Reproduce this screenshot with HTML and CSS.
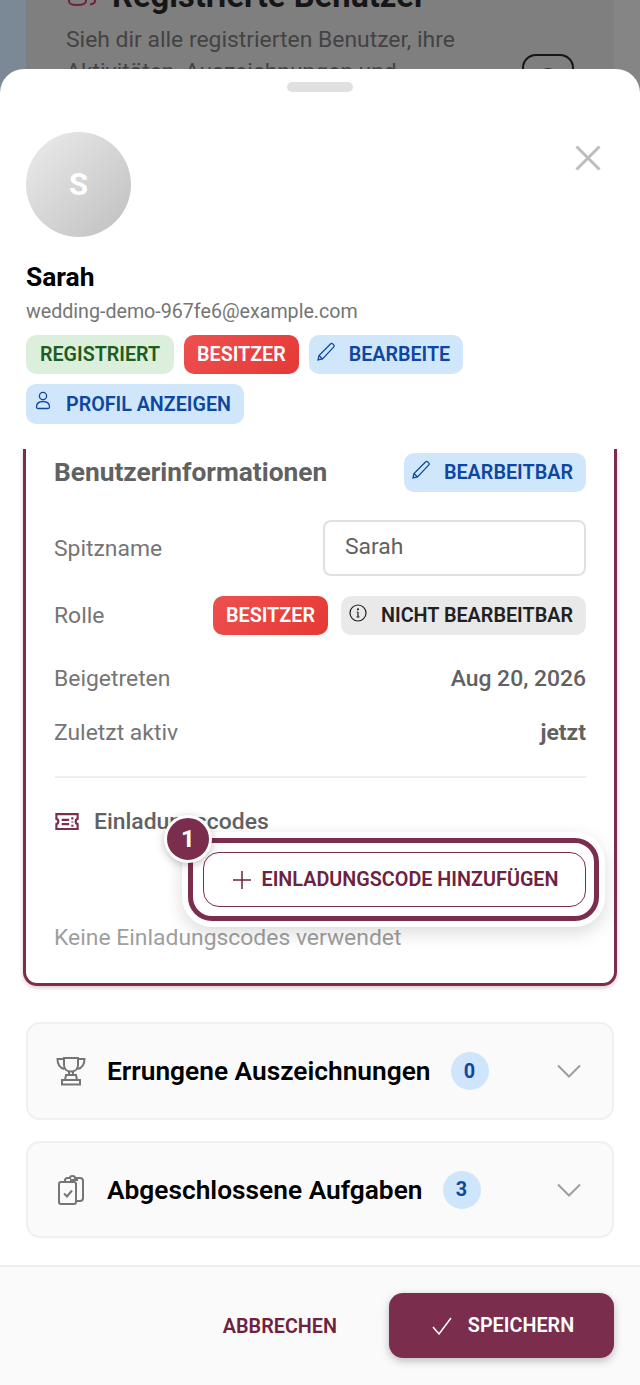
FILE: index.html

```html
<!DOCTYPE html>
<html lang="de">
<head>
    <meta charset="UTF-8">
    <meta name="viewport" content="width=device-width, initial-scale=1.0">
    <title>Registrierte Benutzer</title>
    <link rel="stylesheet" href="styles.css">
</head>
<body>
    <div class="backdrop">
        <div class="behind-card">
            <div class="behind-title">
                <svg class="behind-icon" viewBox="0 0 28 28" fill="none" stroke="#6d2240" stroke-width="2"><path d="M1 21c0-4 3-6 8-6s9 2 9 6c0 3-3 4-9 4s-8-1-8-4z"/><path d="M18 16c5 0 9 1 9 5 0 2-2 3-5 3.500"/></svg>
                <span>Registrierte Benutzer</span>
            </div>
            <p class="behind-text">Sieh dir alle registrierten Benutzer, ihre Aktivitäten, Auszeichnungen und</p>
            <div class="behind-button"></div>
        </div>
    </div>

    <div class="sheet">
        <div class="handle"></div>
        <div class="sheet-head">
            <div class="avatar-row">
                <div class="avatar">S</div>
                <svg class="close" viewBox="0 0 26 26" fill="none" stroke="#bdbdbd" stroke-width="3"><path d="M1.500 1.500l23 23M24.500 1.500l-23 23"/></svg>
            </div>
            <div class="name">Sarah</div>
            <div class="email">wedding-demo-967fe6@example.com</div>
            <div class="chips">
                <span class="chip chip-green">REGISTRIERT</span>
                <span class="chip chip-red">BESITZER</span>
                <span class="chip chip-blue">
                    <svg class="chip-icon" viewBox="0 0 20 20" fill="none" stroke="currentColor" stroke-width="1.300"><path d="M2 18l1-4.500L14.500 2c.7-.7 1.600-.7 2.200-.1l1 1c.6.6.6 1.500-.1 2.200L6.500 17z"/><path d="M3 13.500l3.500 3.500"/></svg>
                    BEARBEITE
                </span>
                <span class="chip chip-blue">
                    <svg class="chip-icon" viewBox="0 0 20 20" fill="none" stroke="currentColor" stroke-width="1.300"><circle cx="10" cy="5" r="3.600"/><path d="M3.500 16c0-3.500 2.500-5.500 6.500-5.500s6.500 2 6.500 5.500c0 1-.8 1.500-1.500 1.500H5c-.7 0-1.500-.5-1.500-1.500z"/></svg>
                    PROFIL ANZEIGEN
                </span>
            </div>
        </div>

        <div class="scroll">
            <section class="info-card">
                <div class="info-head">
                    <h2>Benutzerinformationen</h2>
                    <span class="chip chip-blue">
                        <svg class="chip-icon" viewBox="0 0 20 20" fill="none" stroke="currentColor" stroke-width="1.300"><path d="M2 18l1-4.500L14.500 2c.7-.7 1.600-.7 2.200-.1l1 1c.6.6.6 1.500-.1 2.200L6.500 17z"/><path d="M3 13.500l3.500 3.500"/></svg>
                        BEARBEITBAR
                    </span>
                </div>
                <div class="row row-nick">
                    <span class="label">Spitzname</span>
                    <div class="nick-input">Sarah</div>
                </div>
                <div class="row row-role">
                    <span class="label">Rolle</span>
                    <div class="role-chips">
                        <span class="chip chip-red">BESITZER</span>
                        <span class="chip chip-gray">
                            <svg class="chip-icon" viewBox="0 0 20 20" fill="none" stroke="currentColor" stroke-width="1.200"><circle cx="10" cy="10" r="8"/><path d="M10 9v5M8.500 14h3M8.800 9H10"/><circle cx="10" cy="6.300" r=".5"/></svg>
                            NICHT BEARBEITBAR
                        </span>
                    </div>
                </div>
                <div class="row row-joined">
                    <span class="label">Beigetreten</span>
                    <span class="value">Aug 20, 2026</span>
                </div>
                <div class="row row-active">
                    <span class="label">Zuletzt aktiv</span>
                    <span class="value value-bold">jetzt</span>
                </div>
                <div class="divider"></div>
                <div class="codes-head">
                    <svg class="ticket" viewBox="0 0 22 16" fill="none" stroke="#7b2d4d" stroke-width="2"><path d="M1 1h20v4.500c-1.300.3-1.800 1.300-1.800 2.500s.5 2.200 1.800 2.500V15H1v-4.500C2.300 10.200 2.800 9.200 2.800 8S2.300 5.800 1 5.500z"/><path d="M6 6.500h7M6 10.500h7M16 4v2M16 8v1M16 11v2"/></svg>
                    <span>Einladungscodes</span>
                </div>
                <div class="code-action">
                    <div class="spotlight"></div>
                    <div class="step-badge">1</div>
                    <button class="add-code">
                        <svg class="plus" viewBox="0 0 18 18" fill="none" stroke="currentColor" stroke-width="1.500"><path d="M9 0v18M0 9h18"/></svg>
                        EINLADUNGSCODE HINZUFÜGEN
                    </button>
                </div>
                <p class="codes-empty">Keine Einladungscodes verwendet</p>
            </section>

            <section class="accordion">
                <svg class="acc-icon" viewBox="0 0 30 30" fill="none" stroke="#757575" stroke-width="2"><path d="M8 2h14v7c0 4-3 6.500-7 6.500S8 13 8 9z"/><path d="M8 3H1.500c0 5 2 9 7 10M22 3h6.500c0 5-2 9-7 10"/><path d="M13 15.500V19h4v-3.500M10 19h10l1 5H9zM6 24h18v4.500H6z"/></svg>
                <span class="acc-title">Errungene Auszeichnungen</span>
                <span class="count">0</span>
                <svg class="chevron" viewBox="0 0 24 14" fill="none" stroke="#9e9e9e" stroke-width="2"><path d="M1 1.500l11 11 11-11"/></svg>
            </section>
            <section class="accordion">
                <svg class="acc-icon" viewBox="0 0 30 30" fill="none" stroke="#757575" stroke-width="2"><rect x="3" y="7" width="17" height="22" rx="2"/><path d="M9 7V5.500C9 4 10 3 11.500 3H14c0-1.200 1-2 2.500-2S19 1.800 19 3h5c1.500 0 3 1 3 3v17c0 2-1.500 3-3 3h-4"/><path d="M14 5h8"/><path d="M8 18.500l3 3 5-6"/></svg>
                <span class="acc-title">Abgeschlossene Aufgaben</span>
                <span class="count">3</span>
                <svg class="chevron" viewBox="0 0 24 14" fill="none" stroke="#9e9e9e" stroke-width="2"><path d="M1 1.500l11 11 11-11"/></svg>
            </section>
        </div>

        <footer class="sheet-foot">
            <button class="btn-cancel">ABBRECHEN</button>
            <button class="btn-save">
                <svg class="check" viewBox="0 0 20 18" fill="none" stroke="currentColor" stroke-width="1.500"><path d="M1 10l6 7L19 1"/></svg>
                SPEICHERN
            </button>
        </footer>
    </div>
</body>
</html>
```

FILE: styles.css

```css
* {
    box-sizing: border-box;
}
html, body {
    height: 100%;
}
body {
    margin: 0;
    font-family: Roboto, "Noto Sans", sans-serif;
    background: #808080;
    overflow: hidden;
    position: relative;
}

/* page behind the sheet */
.backdrop {
    height: 100%;
    padding: 0 26px;
    background: linear-gradient(90deg, #7b8896 26px, #858585 26px);
}
.behind-card {
    height: 100%;
    background: #7f7f7f;
    padding: 0 40px;
    position: relative;
    display: flow-root;
}
.behind-title {
    display: flex;
    align-items: center;
    gap: 16px;
    margin-top: -22px;
    font-size: 32.7px;
    font-weight: 700;
    color: #161616;
    height: 36px;
    padding-left: 2px;
}
.behind-icon {
    width: 28px;
    height: 28px;
    margin-top: -4px;
}
.behind-text {
    margin: 10px 0 0;
    width: 430px;
    font-size: 22.9px;
    line-height: 32px;
    color: #434343;
}
.behind-button {
    position: absolute;
    left: 496px;
    top: 54px;
    width: 52px;
    height: 50px;
    border: 2px solid #161616;
    border-radius: 14px;
}
.behind-button::after {
    content: '';
    position: absolute;
    left: 16px;
    top: 12px;
    width: 16px;
    height: 16px;
    border-radius: 50%;
    background: #333;
}

/* bottom sheet */
.sheet {
    position: absolute;
    left: 0;
    right: 0;
    top: 69px;
    bottom: 0;
    display: flex;
    flex-direction: column;
    background: #fff;
    border-radius: 24px 24px 0 0;
}
.handle {
    width: 66px;
    height: 10px;
    margin: 13px auto 0;
    background: #e0e0e0;
    border-radius: 5px;
}
.sheet-head {
    padding: 40px 26px 0;
}
.avatar-row {
    display: flex;
    justify-content: space-between;
    align-items: flex-start;
}
.avatar {
    width: 105px;
    height: 105px;
    border-radius: 50%;
    background: linear-gradient(135deg, #ececec, #bfbfbf);
    color: #fff;
    font-size: 31px;
    font-weight: 700;
    display: flex;
    align-items: center;
    justify-content: center;
}
.close {
    width: 26px;
    height: 26px;
    margin: 13px 13px 0 0;
}
.name {
    margin-top: 24px;
    font-size: 26.4px;
    line-height: 32px;
    font-weight: 700;
    color: #000;
}
.email {
    margin-top: 7px;
    font-size: 19.65px;
    line-height: 24px;
    color: #757575;
}
.chips {
    display: flex;
    flex-wrap: wrap;
    gap: 10px;
    margin-top: 11px;
}
.chip {
    display: inline-flex;
    align-items: center;
    gap: 13px;
    height: 39px;
    padding: 0 13px;
    border-radius: 10px;
    font-size: 19.7px;
    font-weight: 600;
    white-space: nowrap;
}
.chips .chip:last-child {
    height: 40px;
}
.info-card .chip {
    font-size: 19.8px;
}
.chip-green {
    background: #dcefdc;
    color: #1b5e20;
    padding: 0 14px;
}
.chip-red {
    background: linear-gradient(135deg, #ee5050, #e53935);
    color: #fff;
}
.chip-blue {
    background: #d0e6fb;
    color: #0d47a1;
    padding: 0 13px 0 7px;
}
.chip-gray {
    background: #e9e9e9;
    color: #212121;
    padding: 0 13px 0 7px;
}
.chip-icon {
    width: 20px;
    height: 20px;
    margin-top: -6px;
}

/* scroll area */
.scroll {
    flex: 1;
    overflow: hidden;
    padding: 0 23px;
    margin-top: 25px;
}
.info-card {
    height: 537px;
    border: 3px solid #7b2d4d;
    border-top: 0;
    border-radius: 0 0 14px 14px;
    box-shadow: 0 2px 4px rgba(123, 45, 77, 0.25);
    padding: 4px 28px 0;
}
.info-head {
    display: flex;
    justify-content: space-between;
    align-items: center;
}
.info-head h2 {
    margin: 0 0 2px;
    font-size: 26.3px;
    font-weight: 700;
    color: #616161;
}
.row {
    display: flex;
    justify-content: space-between;
    align-items: center;
    font-size: 22.9px;
}
.label {
    color: #757575;
}
.value {
    color: #616161;
    font-weight: 500;
}
.value-bold {
    font-weight: 700;
}
.row-nick {
    margin-top: 28px;
}
.nick-input {
    width: 263px;
    height: 56px;
    border: 2px solid #e0e0e0;
    border-radius: 8px;
    padding: 0 20px 3px;
    display: flex;
    align-items: center;
    color: #616161;
}
.row-role {
    margin-top: 20px;
}
.role-chips {
    display: flex;
    gap: 13px;
}
.row-joined {
    margin-top: 27px;
    height: 32px;
}
.row-active {
    margin-top: 22px;
    height: 32px;
}
.divider {
    height: 2px;
    margin: 28px 0 0 1px;
    background: #eeeeee;
}
.codes-head {
    display: flex;
    align-items: center;
    gap: 15px;
    margin-top: 27px;
    height: 32px;
    font-size: 22.9px;
    font-weight: 500;
    color: #616161;
}
.ticket {
    width: 24px;
    height: 17px;
    margin-left: 1px;
}
.code-action {
    position: relative;
    display: flex;
    justify-content: flex-end;
    margin-top: 15px;
}
.add-code {
    position: relative;
    width: 383px;
    height: 55px;
    display: flex;
    align-items: center;
    justify-content: center;
    gap: 10px;
    padding: 0 0 0 3px;
    border: 1.5px solid #7b2d4d;
    border-radius: 16px;
    background: #fff;
    color: #6d2240;
    font-family: inherit;
    font-size: 19.8px;
    font-weight: 600;
}
.plus {
    width: 18px;
    height: 18px;
}
.spotlight {
    position: absolute;
    left: 134px;
    right: -13px;
    top: -14px;
    bottom: -14px;
    border: 5px solid #7b2d4d;
    border-radius: 24px;
    box-shadow: 0 0 0 6px #fff, 0 6px 18px 6px rgba(0, 0, 0, 0.14);
}
.step-badge {
    position: absolute;
    left: 110px;
    top: -37px;
    width: 48px;
    height: 48px;
    border-radius: 50%;
    border: 3px solid #fff;
    background: #7b2d4d;
    color: #fff;
    font-size: 24px;
    font-weight: 700;
    display: flex;
    align-items: center;
    justify-content: center;
    box-shadow: 0 2px 8px rgba(0, 0, 0, 0.25);
    z-index: 2;
}
.codes-empty {
    margin: 15px 0 0;
    font-size: 22.9px;
    line-height: 32px;
    color: #9e9e9e;
}

/* accordions */
.accordion {
    display: flex;
    align-items: center;
    height: 98px;
    margin: 36px 3px 0;
    padding: 0 31px 0 28px;
    background: #fafafa;
    border: 2px solid #f0f0f0;
    border-radius: 14px;
}
.accordion + .accordion {
    height: 97px;
    margin-top: 21px;
}
.acc-icon {
    width: 30px;
    height: 30px;
    flex-shrink: 0;
}
.acc-title {
    margin-left: 21px;
    font-size: 26.3px;
    font-weight: 600;
    color: #000;
}
.count {
    width: 38px;
    height: 38px;
    margin-left: 20px;
    border-radius: 50%;
    background: #cfe5fb;
    color: #0d47a1;
    font-size: 19.8px;
    font-weight: 700;
    display: flex;
    align-items: center;
    justify-content: center;
}
.chevron {
    width: 24px;
    height: 14px;
    margin-left: auto;
}

/* footer */
.sheet-foot {
    height: 120px;
    display: flex;
    justify-content: flex-end;
    align-items: flex-start;
    gap: 52px;
    padding: 26px 26px 0;
    background: #fafafa;
    border-top: 2px solid #eeeeee;
}
.btn-cancel {
    height: 65px;
    padding: 1px 0 0;
    border: 0;
    background: none;
    color: #6d2240;
    font-family: inherit;
    font-size: 19.8px;
    font-weight: 600;
}
.btn-save {
    width: 225px;
    height: 65px;
    display: flex;
    align-items: center;
    justify-content: center;
    gap: 16px;
    padding: 0 0 0 3px;
    border: 0;
    border-radius: 14px;
    background: #7b2d4d;
    color: #fff;
    font-family: inherit;
    font-size: 19.8px;
    font-weight: 600;
    box-shadow: 0 3px 8px rgba(0, 0, 0, 0.25);
}
.check {
    width: 20px;
    height: 18px;
}
```
